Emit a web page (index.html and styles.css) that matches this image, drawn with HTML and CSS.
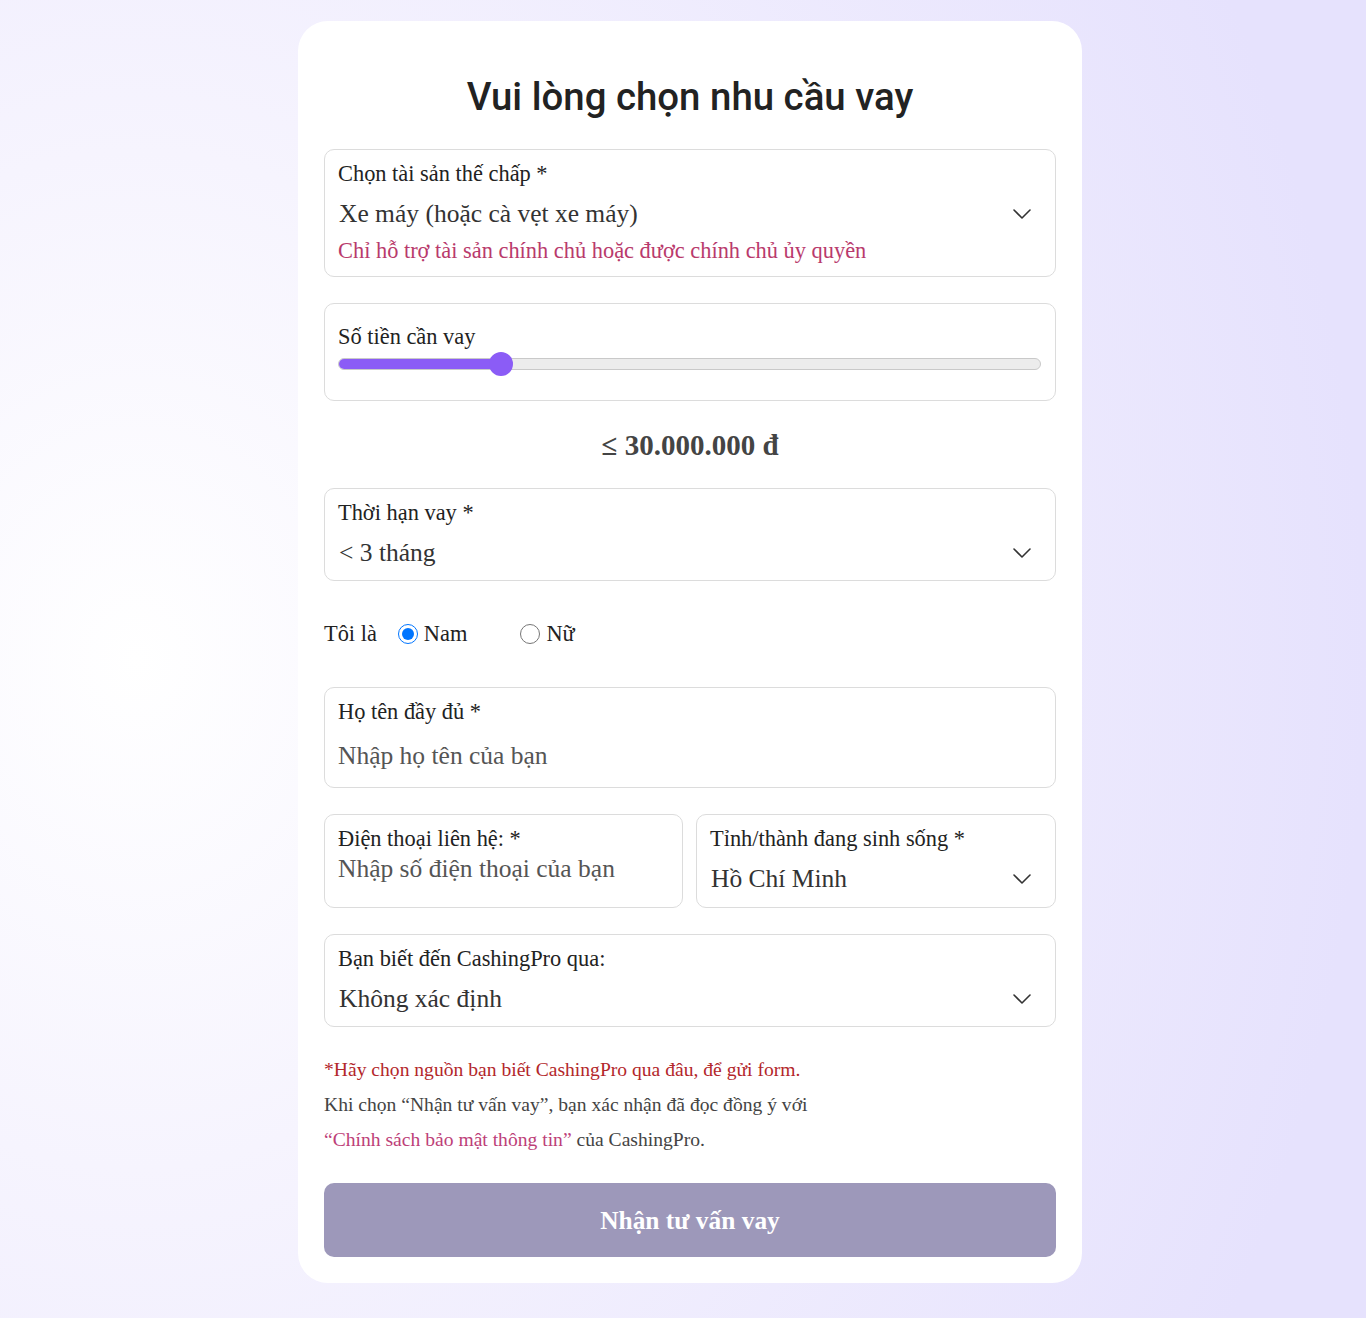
FILE: index.html
```html
<!DOCTYPE html>
<html lang="vi">
<head>
<meta charset="utf-8">
<title>Vui lòng chọn nhu cầu vay</title>
<link rel="stylesheet" href="styles.css">
</head>
<body>
<div class="page">
  <form class="card">
    <h1 class="title">Vui lòng chọn nhu cầu vay</h1>

    <div class="field">
      <div class="field-label">Chọn tài sản thế chấp *</div>
      <div class="field-value">
        <span>Xe máy (hoặc cà vẹt xe máy)</span>
        <svg class="chev" width="18" height="10" viewBox="0 0 18 10"><path d="M1 1 L9 9 L17 1" fill="none" stroke="#333" stroke-width="1.6" stroke-linecap="round" stroke-linejoin="round"/></svg>
      </div>
      <div class="field-help">Chỉ hỗ trợ tài sản chính chủ hoặc được chính chủ ủy quyền</div>
    </div>

    <div class="field field-slider">
      <div class="field-label">Số tiền cần vay</div>
      <div class="slider">
        <div class="track">
          <div class="fill" style="width:23.2%"></div>
        </div>
        <div class="thumb" style="left:23.2%"></div>
      </div>
    </div>

    <div class="amount">≤ 30.000.000 đ</div>

    <div class="field">
      <div class="field-label">Thời hạn vay *</div>
      <div class="field-value">
        <span>&lt; 3 tháng</span>
        <svg class="chev" width="18" height="10" viewBox="0 0 18 10"><path d="M1 1 L9 9 L17 1" fill="none" stroke="#333" stroke-width="1.6" stroke-linecap="round" stroke-linejoin="round"/></svg>
      </div>
    </div>

    <div class="gender">
      <span class="gender-label">Tôi là</span>
      <label class="radio"><input type="radio" name="g" checked><span>Nam</span></label>
      <label class="radio"><input type="radio" name="g"><span>Nữ</span></label>
    </div>

    <div class="field field-input">
      <div class="field-label">Họ tên đầy đủ *</div>
      <div class="field-value placeholder">Nhập họ tên của bạn</div>
    </div>

    <div class="row">
      <div class="field field-phone">
        <div class="field-label">Điện thoại liên hệ: *</div>
        <div class="field-value placeholder">Nhập số điện thoại của bạn</div>
      </div>
      <div class="field">
        <div class="field-label">Tỉnh/thành đang sinh sống *</div>
        <div class="field-value">
          <span>Hồ Chí Minh</span>
          <svg class="chev" width="18" height="10" viewBox="0 0 18 10"><path d="M1 1 L9 9 L17 1" fill="none" stroke="#333" stroke-width="1.6" stroke-linecap="round" stroke-linejoin="round"/></svg>
        </div>
      </div>
    </div>

    <div class="field">
      <div class="field-label">Bạn biết đến CashingPro qua:</div>
      <div class="field-value">
        <span>Không xác định</span>
        <svg class="chev" width="18" height="10" viewBox="0 0 18 10"><path d="M1 1 L9 9 L17 1" fill="none" stroke="#333" stroke-width="1.6" stroke-linecap="round" stroke-linejoin="round"/></svg>
      </div>
    </div>

    <div class="notes">
      <p class="note-warn">*Hãy chọn nguồn bạn biết CashingPro qua đâu, để gửi form.</p>
      <p>Khi chọn “Nhận tư vấn vay”, bạn xác nhận đã đọc đồng ý với</p>
      <p><a class="policy" href="#">“Chính sách bảo mật thông tin”</a> của CashingPro.</p>
    </div>

    <button type="button" class="submit">Nhận tư vấn vay</button>
  </form>
</div>
</body>
</html>
```

FILE: styles.css
```css
* { box-sizing: border-box; }

html, body {
  margin: 0;
  padding: 0;
}

body {
  min-height: 1318px;
  background: radial-gradient(ellipse 90% 110% at 10% 50%, #ffffff 0%, #f6f4fe 35%, #e6e2fd 100%);
  font-family: "Liberation Serif", "Times New Roman", serif;
  color: #222;
}

.page {
  display: flex;
  justify-content: center;
  padding: 21px 0 36px 14px;
}

.card {
  width: 784px;
  background: #ffffff;
  border-radius: 30px;
  padding: 53px 26px 26px;
  display: flex;
  flex-direction: column;
}

.title {
  margin: 0 0 29px;
  font-family: Roboto, "Liberation Sans", sans-serif;
  font-weight: 500;
  font-size: 38.4px;
  line-height: 46px;
  text-align: center;
  color: #222;
}

.field {
  border: 1px solid #dcdcdc;
  border-radius: 10px;
  padding: 11px 14px 12px 13px;
  margin-bottom: 26px;
}

.field-label {
  font-size: 22.4px;
  line-height: 25px;
  color: #222;
}

.field-value {
  margin-top: 13px;
  font-size: 25.5px;
  line-height: 30px;
  color: #333;
  display: flex;
  align-items: center;
  justify-content: space-between;
}

.field-value span { padding-left: 1px; }

.chev {
  flex: none;
  margin-right: 10px;
}

.field-help {
  margin-top: 9px;
  font-size: 22.4px;
  line-height: 26px;
  color: #b93a6c;
}

.field-slider {
  padding: 20px 14px 24px 13px;
}

.slider {
  position: relative;
  margin-top: 3px;
  height: 24px;
}

.track {
  position: absolute;
  left: 0;
  right: 0;
  top: 6px;
  height: 12px;
  border-radius: 6px;
  background: #ececec;
  border: 1px solid #c9c9c9;
  overflow: hidden;
}

.fill {
  height: 100%;
  background: #8b5cf6;
}

.thumb {
  position: absolute;
  top: 0;
  width: 24px;
  height: 24px;
  margin-left: -12px;
  border-radius: 50%;
  background: #8b5cf6;
}

.amount {
  margin: 1px 0 26px;
  text-align: center;
  font-weight: bold;
  font-size: 29px;
  line-height: 34px;
  color: #444;
}

.gender {
  display: flex;
  align-items: center;
  margin: 15px 0 41px;
  font-size: 22.4px;
  line-height: 24px;
  color: #222;
}

.gender-label { margin-right: 21px; }

.radio {
  display: flex;
  align-items: center;
  gap: 6px;
  margin-right: 53px;
}

.radio input {
  width: 20px;
  height: 20px;
  margin: 0;
}

.field-input .field-value { margin-top: 17px; }
.field-input { padding-bottom: 16px; }

.placeholder { color: #555; }

.row {
  display: grid;
  grid-template-columns: 359px 1fr;
  gap: 13px;
}

.row .field {
  padding-bottom: 13px;
}

.field-phone .field-value { margin-top: 3px; }

.notes {
  margin-top: -1px;
  font-size: 19.6px;
  line-height: 35px;
  color: #444;
}

.notes p { margin: 0; }

.note-warn { color: #b3272b; }

.policy {
  color: #bd4078;
  text-decoration: none;
}

.submit {
  margin-top: 26px;
  height: 74px;
  border: none;
  border-radius: 10px;
  background: #9d98ba;
  color: #ffffff;
  font-family: "Liberation Serif", "Times New Roman", serif;
  font-weight: bold;
  font-size: 25.4px;
}
```
